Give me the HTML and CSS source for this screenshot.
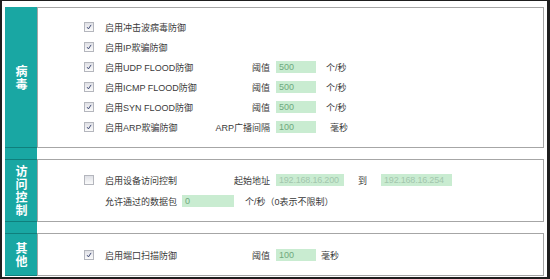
FILE: index.html
```html
<!doctype html>
<html lang="zh-CN">
    <head>
        <meta charset="UTF-8" />
        <title>安全设置</title>
        <link rel="stylesheet" href="styles.css">
    </head>
    <body>
        <div class="frame">
            <div class="group group-virus">
                <div class="side"><span class="side-title">病毒</span></div>
                <div class="box">
                    <div class="row">
                        <span class="cb"><svg viewBox="0 0 10 10"><path d="M2.6 5.2 L4.3 7.4 L7.6 2.4" /></svg></span>
                        <span class="name">启用冲击波病毒防御</span>
                    </div>
                    <div class="row">
                        <span class="cb"><svg viewBox="0 0 10 10"><path d="M2.6 5.2 L4.3 7.4 L7.6 2.4" /></svg></span>
                        <span class="name">启用IP欺骗防御</span>
                    </div>
                    <div class="row">
                        <span class="cb"><svg viewBox="0 0 10 10"><path d="M2.6 5.2 L4.3 7.4 L7.6 2.4" /></svg></span>
                        <span class="name">启用UDP FLOOD防御</span>
                        <span class="key">阈值</span>
                        <input class="field" type="text" value="500" />
                        <span class="unit">个/秒</span>
                    </div>
                    <div class="row">
                        <span class="cb"><svg viewBox="0 0 10 10"><path d="M2.6 5.2 L4.3 7.4 L7.6 2.4" /></svg></span>
                        <span class="name">启用ICMP FLOOD防御</span>
                        <span class="key">阈值</span>
                        <input class="field" type="text" value="500" />
                        <span class="unit">个/秒</span>
                    </div>
                    <div class="row">
                        <span class="cb"><svg viewBox="0 0 10 10"><path d="M2.6 5.2 L4.3 7.4 L7.6 2.4" /></svg></span>
                        <span class="name">启用SYN FLOOD防御</span>
                        <span class="key">阈值</span>
                        <input class="field" type="text" value="500" />
                        <span class="unit">个/秒</span>
                    </div>
                    <div class="row">
                        <span class="cb"><svg viewBox="0 0 10 10"><path d="M2.6 5.2 L4.3 7.4 L7.6 2.4" /></svg></span>
                        <span class="name">启用ARP欺骗防御</span>
                        <span class="key">ARP广播间隔</span>
                        <input class="field" type="text" value="100" />
                        <span class="unit unit-far">毫秒</span>
                    </div>
                </div>
            </div>

            <div class="gap"><div class="side"></div></div>

            <div class="group group-access">
                <div class="side"><span class="side-title">访问控制</span></div>
                <div class="box">
                    <div class="row">
                        <span class="cb"></span>
                        <span class="name">启用设备访问控制</span>
                        <span class="key">起始地址</span>
                        <input class="field field-ip" type="text" value="192.168.16.200" />
                        <span class="to">到</span>
                        <input class="field field-ip field-ip-end" type="text" value="192.168.16.254" />
                    </div>
                    <div class="row row-indent">
                        <span class="label">允许通过的数据包</span>
                        <input class="field field-rate" type="text" value="0" />
                        <span class="unit">个/秒（0表示不限制）</span>
                    </div>
                </div>
            </div>

            <div class="gap"><div class="side"></div></div>

            <div class="group group-other">
                <div class="side"><span class="side-title">其他</span></div>
                <div class="box">
                    <div class="row">
                        <span class="cb"><svg viewBox="0 0 10 10"><path d="M2.6 5.2 L4.3 7.4 L7.6 2.4" /></svg></span>
                        <span class="name">启用端口扫描防御</span>
                        <span class="key">阈值</span>
                        <input class="field" type="text" value="100" />
                        <span class="unit unit-near">毫秒</span>
                    </div>
                </div>
            </div>
        </div>
    </body>
</html>
```

FILE: styles.css
```css
html,
body {
    margin: 0;
    padding: 0;
    background-color: #ffffff;
}
body {
    font-family: "Liberation Sans", "Noto Sans CJK SC", sans-serif;
    font-size: 9px;
    color: #3a3a3a;
}
.frame {
    box-sizing: border-box;
    width: 550px;
    height: 279px;
    border-style: solid;
    border-color: #1e1e1e;
    border-width: 1px 3px 2px 2px;
    padding: 6px 3px 1px 3px;
    display: flex;
    flex-direction: column;
}
.group,
.gap {
    display: flex;
}
.gap {
    height: 11px;
}
.side {
    width: 32px;
    flex: none;
    background-color: #19a7a3;
    display: flex;
    align-items: center;
    justify-content: center;
}
.side-title {
    writing-mode: vertical-rl;
    color: #ffffff;
    font-family: "Noto Sans CJK SC", sans-serif;
    font-weight: bold;
    font-size: 12px;
    line-height: 14px;
    letter-spacing: 1px;
}
.group .side {
    border-top: 1px solid #0f7f7c;
    border-bottom: 1px solid #0f7f7c;
}
.group:first-child .side {
    border-top-color: #19a7a3;
}
.box {
    flex: 1;
    border: 1px solid #a6a6a6;
    padding: 10px 0 10px 46px;
    display: flex;
    flex-direction: column;
    gap: 1px;
}
.group-virus .box {
    padding-top: 9px;
    gap: 0;
}
.group-other .box {
    padding-top: 11px;
}
.row {
    display: flex;
    align-items: center;
    height: 20px;
    white-space: nowrap;
}
.row-indent {
    padding-left: 21px;
}
.cb {
    box-sizing: border-box;
    width: 10px;
    height: 10px;
    margin-right: 11px;
    border: 1px solid #b4b6bd;
    background: linear-gradient(#dfe0e6, #fbfbfb);
    flex: none;
}
.cb svg {
    display: block;
    width: 8px;
    height: 8px;
}
.cb path {
    fill: none;
    stroke: #3a4570;
    stroke-width: 1.2;
}
.name {
    width: 100px;
}
.key {
    width: 65px;
    text-align: right;
    margin-right: 6px;
}
.label {
    margin-right: 5px;
}
.field {
    box-sizing: border-box;
    width: 40px;
    height: 12px;
    border: none;
    padding: 0 0 0 3px;
    margin: 0 10px 0 0;
    background-color: #c9ecd1;
    color: #6fa97d;
    font-family: "Liberation Sans", sans-serif;
    font-size: 9px;
    outline: none;
}
.field-ip {
    width: 68px;
    margin-right: 14px;
    color: #a3c6ad;
    letter-spacing: -0.2px;
}
.field-ip-end {
    width: 71px;
}
.field-rate {
    width: 52px;
    margin-right: 11px;
}
.to {
    margin-right: 14px;
}
.unit-far {
    margin-left: 4px;
}
.unit-near {
    margin-left: -5px;
}
```
